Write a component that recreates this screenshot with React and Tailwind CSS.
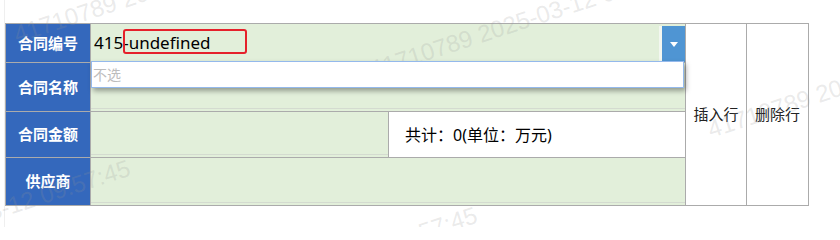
export default function App() {
  return (
    <div className="relative h-[227px] w-[840px] overflow-hidden bg-white font-['Noto_Sans','Noto_Sans_CJK_SC',sans-serif]">
      <div className="ml-[4px] h-full border-l border-[#efefef] pt-[23px]">
        <div className="relative grid w-fit grid-cols-[84px_297px_296px_60px_61px] grid-rows-[38px_48px_45px_47px] gap-px bg-[#ababab] p-px">
          {/* row 1 */}
          <div className="col-start-1 row-start-1 flex items-center justify-center bg-[#3468bc] text-[15px] font-bold text-white">
            合同编号
          </div>
          <div className="col-span-2 col-start-2 row-start-1 flex bg-[#e2efda]">
            <div className="flex flex-1 items-center border-b border-[#f4f8f1] pl-[3px] text-[17px] text-black">
              415-undefined
            </div>
            <div className="mt-[2px] flex w-[26px] items-center justify-center border-l-[3px] border-[#f3f7f0] bg-[#4f95d3]">
              <span className="h-0 w-0 border-x-[4.5px] border-t-[5px] border-x-transparent border-t-white" />
            </div>
          </div>

          {/* actions */}
          <div className="col-start-4 row-span-4 row-start-1 flex items-center justify-center bg-white text-[15px] text-[#222]">
            插入行
          </div>
          <div className="col-start-5 row-span-4 row-start-1 flex items-center justify-center bg-white text-[15px] text-[#222]">
            删除行
          </div>

          {/* row 2 */}
          <div className="col-start-1 row-start-2 flex items-center justify-center bg-[#3468bc] text-[15px] font-bold text-white">
            合同名称
          </div>
          <div className="col-span-2 col-start-2 row-start-2 flex flex-col bg-[#e2efda]">
            <div className="mb-[2px] flex-1 border-b border-[#d4dbd0]" />
          </div>

          {/* row 3 */}
          <div className="col-start-1 row-start-3 flex items-center justify-center bg-[#3468bc] text-[15px] font-bold text-white">
            合同金额
          </div>
          <div className="col-start-2 row-start-3 flex flex-col bg-[#e2efda]">
            <div className="mb-[2px] flex-1 border-b border-[#d4dbd0]" />
          </div>
          <div className="col-start-3 row-start-3 flex items-center bg-white pl-4 text-[16px] text-black">
            共计：0(单位：万元)
          </div>

          {/* row 4 */}
          <div className="col-start-1 row-start-4 flex items-center justify-center bg-[#3468bc] text-[15px] font-bold text-white">
            供应商
          </div>
          <div className="col-span-2 col-start-2 row-start-4 flex flex-col bg-[#e2efda]">
            <div className="mb-[2px] flex-1 border-b border-[#d4dbd0]" />
          </div>

          {/* watermark */}
          <div className="pointer-events-none absolute inset-0 z-10 font-['Liberation_Sans',sans-serif] text-[24px] leading-none whitespace-nowrap text-[rgba(150,150,150,0.2)]">
            <span className="absolute left-[12px] top-[0px] origin-[0_20px] -rotate-[18deg]">41710789 2025-03-12 09:57:45</span>
            <span className="absolute left-[368px] top-[35px] origin-[0_20px] -rotate-[18deg]">41710789 2025-03-12 09:57:45</span>
            <span className="absolute left-[706px] top-[95px] origin-[0_20px] -rotate-[18deg]">41710789 2025-03-12 09:57:45</span>
            <span className="absolute left-[-193px] top-[236px] origin-[0_20px] -rotate-[18deg]">41710789 2025-03-12 09:57:45</span>
            <span className="absolute left-[154px] top-[283px] origin-[0_20px] -rotate-[18deg]">41710789 2025-03-12 09:57:45</span>
          </div>

          {/* open select list */}
          <div className="absolute left-[86px] top-[38px] z-20 flex h-[27px] w-[593px] items-center border border-[#94b9ec] bg-white pl-[1px] text-[14px] text-[#bdbdbd] shadow-[2px_3px_5px_rgba(0,0,0,0.35)]">
            不选
          </div>

          {/* annotation */}
          <div className="pointer-events-none absolute left-[118px] top-[6px] z-30 h-[25px] w-[124px] rounded-[3px] border-2 border-[#e5212b]" />
        </div>
      </div>
    </div>
  );
}
